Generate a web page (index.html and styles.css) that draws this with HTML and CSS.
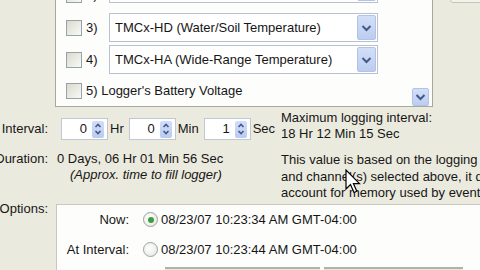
FILE: index.html
```html
<!DOCTYPE html>
<html>
<head>
<meta charset="utf-8">
<link rel="stylesheet" href="styles.css">
</head>
<body>
<div class="top">
  <div class="list">
    <div class="row row2">
      <span class="check"></span><span class="num">2)</span>
      <div class="combo"><span class="combo-text">TMCx-HT (Temperature/RH Sensor)</span>
        <span class="drop"><svg width="11" height="8" viewBox="0 0 11 8"><polyline points="1.5,2 5.5,6 9.5,2" fill="none" stroke="#44588a" stroke-width="2"/></svg></span></div>
    </div>
    <div class="row row3">
      <span class="check"></span><span class="num">3)</span>
      <div class="combo"><span class="combo-text">TMCx-HD (Water/Soil Temperature)</span>
        <span class="drop"><svg width="11" height="8" viewBox="0 0 11 8"><polyline points="1.5,2 5.5,6 9.5,2" fill="none" stroke="#44588a" stroke-width="2"/></svg></span></div>
    </div>
    <div class="row row4">
      <span class="check"></span><span class="num">4)</span>
      <div class="combo"><span class="combo-text">TMCx-HA (Wide-Range Temperature)</span>
        <span class="drop"><svg width="11" height="8" viewBox="0 0 11 8"><polyline points="1.5,2 5.5,6 9.5,2" fill="none" stroke="#44588a" stroke-width="2"/></svg></span></div>
    </div>
    <div class="row row5">
      <span class="check"></span><span class="plain">5) Logger's Battery Voltage</span>
      <span class="scroll-btn"><svg width="11" height="8" viewBox="0 0 11 8"><polyline points="1.5,2 5.5,6 9.5,2" fill="none" stroke="#44588a" stroke-width="2"/></svg></span>
    </div>
  </div>
  <div class="corner-btn"></div>
</div>

<div class="middle">
  <div class="left">
    <div class="field interval">
      <div class="label">Interval:</div>
      <div class="spin"><span class="val">0</span><span class="spin-btn"><svg width="8" height="14" viewBox="0 0 8 14"><polyline points="1.5,5 4,2.5 6.5,5" fill="none" stroke="#44588a" stroke-width="1.6"/><polyline points="1.5,9 4,11.5 6.5,9" fill="none" stroke="#44588a" stroke-width="1.6"/></svg></span></div>
      <span class="unit">Hr</span>
      <div class="spin"><span class="val">0</span><span class="spin-btn"><svg width="8" height="14" viewBox="0 0 8 14"><polyline points="1.5,5 4,2.5 6.5,5" fill="none" stroke="#44588a" stroke-width="1.6"/><polyline points="1.5,9 4,11.5 6.5,9" fill="none" stroke="#44588a" stroke-width="1.6"/></svg></span></div>
      <span class="unit">Min</span>
      <div class="spin"><span class="val">1</span><span class="spin-btn"><svg width="8" height="14" viewBox="0 0 8 14"><polyline points="1.5,5 4,2.5 6.5,5" fill="none" stroke="#44588a" stroke-width="1.6"/><polyline points="1.5,9 4,11.5 6.5,9" fill="none" stroke="#44588a" stroke-width="1.6"/></svg></span></div>
      <span class="unit">Sec</span>
    </div>
    <div class="field duration">
      <div class="label">Duration:</div>
      <div class="dur">
        <div>0 Days, 06 Hr 01 Min 56 Sec</div>
        <div class="approx">(Approx. time to fill logger)</div>
      </div>
    </div>
  </div>
  <div class="right">
    <div>Maximum logging interval:</div>
    <div>18 Hr 12 Min 15 Sec</div>
    <div class="note">This value is based on the logging interval<br>and channel(s) selected above, it does not<br>account for memory used by events.</div>
  </div>
</div>

<div class="options">
  <div class="label">Options:</div>
  <div class="group">
    <div class="opt opt-now"><span class="opt-label">Now:</span><span class="radio on"></span><span class="opt-text">08/23/07 10:23:34 AM GMT-04:00</span></div>
    <div class="opt opt-int"><span class="opt-label">At Interval:</span><span class="radio"></span><span class="opt-text">08/23/07 10:23:44 AM GMT-04:00</span></div>
    <div class="bars"><div class="bar b1"></div><div class="bar b2"></div></div>
  </div>
</div>

<svg class="cursor" width="16" height="26" viewBox="0 0 16 26"><path d="M1 1 V20 L5.5 15.5 L9 23.5 L11.8 22.3 L8.4 14.6 H14.5 Z" fill="#fff" stroke="#000" stroke-width="1.2" stroke-linejoin="miter"/></svg>
</body>
</html>
```

FILE: styles.css
```css
* { box-sizing: border-box; }
html, body { margin: 0; padding: 0; }
body {
  width: 480px;
  height: 270px;
  overflow: hidden;
  position: relative;
  background: #EBEADE;
  font-family: "Liberation Sans", Arial, sans-serif;
  font-size: 13px;
  line-height: 16px;
  color: #161616;
}

/* top list panel */
.top { display: flex; align-items: flex-start; }
.list {
  margin-left: 55px;
  margin-top: -31px;
  width: 378px;
  flex: none;
  background: #FDFDFC;
  border: 1px solid #A9A89E;
  padding: 4px 3px 0 10px;
}
.row { display: flex; align-items: center; }
.row2 { align-items: flex-end; }
.row3 { margin-top: 10px; }
.row4 { margin-top: 3px; }
.row5 { margin-top: 9px; align-items: flex-start; }
.check {
  flex: none;
  width: 16px;
  height: 16px;
  border: 1px solid #97A2A8;
  background: linear-gradient(135deg, #D9D9D0, #FAFAF6);
}
.num { flex: none; width: 23px; margin-left: 4px; }
.plain { margin-left: 4px; white-space: nowrap; }
.combo {
  flex: none;
  width: 269px;
  height: 29px;
  border: 1px solid #B7C1D1;
  background: #fff;
  display: flex;
  align-items: center;
  padding: 0 1px 0 5px;
}
.combo-text { flex: 1; white-space: nowrap; overflow: hidden; }
.drop, .scroll-btn {
  flex: none;
  display: flex;
  align-items: center;
  justify-content: center;
  background: linear-gradient(180deg, #D3DFF8, #BCCDF0);
  border: 1px solid #B3C3E4;
  border-radius: 2px;
}
.drop { width: 19px; height: 25px; }
.scroll-btn { width: 17px; height: 18px; margin-left: auto; margin-top: 5px; }
.corner-btn {
  flex: none;
  margin-left: 17px;
  margin-top: -19px;
  width: 40px;
  height: 22px;
  border: 1px solid #C6C5B6;
  border-radius: 3px;
  background: #F3F2EC;
}

/* middle */
.middle { display: flex; align-items: flex-start; }
.left { width: 281px; flex: none; }
.label {
  width: 48px;
  flex: none;
  display: flex;
  justify-content: flex-end;
  white-space: nowrap;
}
.field { display: flex; align-items: center; }
.interval { margin-top: 11px; height: 22px; }
.interval .label { margin-right: 13px; }
.spin {
  flex: none;
  width: 47px;
  height: 22px;
  border: 1px solid #C0C8D4;
  background: #fff;
  display: flex;
  align-items: center;
  justify-content: flex-end;
  padding-right: 3px;
}
.val { margin-right: 5px; }
.spin-btn {
  width: 12px;
  height: 17px;
  display: flex;
  align-items: center;
  justify-content: center;
  background: linear-gradient(180deg, #D2DEF8, #BACBEF);
  border-radius: 2px;
}
.unit { margin-left: 2px; margin-right: 5px; }
.duration { margin-top: 11px; align-items: flex-start; }
.duration .label { margin-right: 9px; }
.dur { white-space: nowrap; }
.approx { font-style: italic; padding-left: 13px; }

.right { margin-top: 3px; white-space: nowrap; }
.note { margin-top: 10px; line-height: 16.5px; }

/* options */
.options { display: flex; align-items: flex-start; margin-top: 2px; }
.options .label { margin-top: -3px; margin-right: 8px; }
.group {
  flex: none;
  width: 440px;
  height: 90px;
  background: #FDFDFC;
  border: 1px solid #C9C8BA;
  padding: 5px 0 0 0;
}
.opt { display: flex; align-items: center; height: 20px; white-space: nowrap; }
.opt-int { margin-top: 10px; }
.opt-label { width: 72px; text-align: right; flex: none; }
.radio {
  flex: none;
  width: 15px;
  height: 15px;
  border-radius: 50%;
  border: 1px solid #9AA39E;
  background: radial-gradient(circle at 40% 40%, #fff, #E4E4DC);
  margin-left: 14px;
  margin-right: 3px;
  display: flex;
  align-items: center;
  justify-content: center;
}
.radio.on::after {
  content: "";
  width: 6px;
  height: 6px;
  border-radius: 50%;
  background: #3C9E3C;
}
.bars { display: flex; margin-top: 7px; padding-left: 108px; }
.bar {
  height: 20px;
  border-top: 2px solid #B3B2A8;
  background: #E7E6DE;
}
.b1 { width: 155px; }
.b2 { width: 139px; margin-left: 4px; }

.cursor { position: absolute; left: 345px; top: 169px; }
```
